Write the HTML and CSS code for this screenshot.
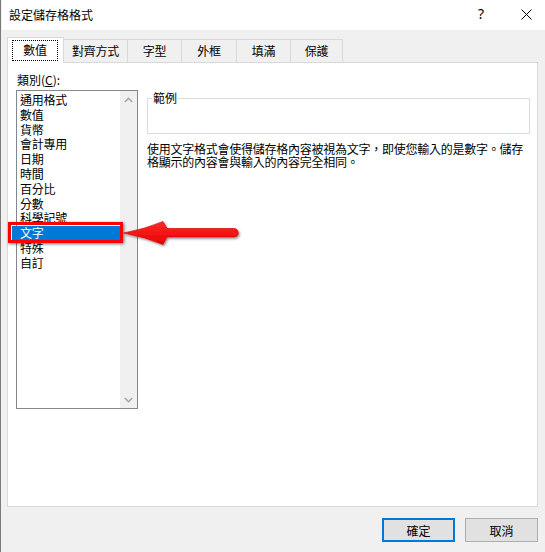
FILE: index.html
```html
<!DOCTYPE html>
<html lang="zh-Hant">
<head>
    <meta charset="UTF-8">
    <title>設定儲存格格式</title>
    <link rel="stylesheet" href="styles.css">
</head>
<body>
    <div class="window">
        <!-- Title bar -->
        <header class="titlebar">
            <span class="title">設定儲存格格式</span>
            <span class="help">?</span>
            <span class="close">
                <svg width="11" height="11" viewBox="0 0 11 11">
                    <path d="M0.5 0.5 L10.5 10.5 M10.5 0.5 L0.5 10.5" stroke="#000" stroke-width="1" fill="none"/>
                </svg>
            </span>
        </header>

        <!-- Tabs -->
        <nav class="tabs">
            <div class="tab active"><span class="focus">數值</span></div>
            <div class="tab">對齊方式</div>
            <div class="tab">字型</div>
            <div class="tab">外框</div>
            <div class="tab">填滿</div>
            <div class="tab">保護</div>
        </nav>

        <!-- Tab page -->
        <section class="panel">
            <div class="category">
                <div class="category-label">類別(<u>C</u>):</div>
                <div class="listbox">
                    <ul class="items">
                        <li class="item">通用格式</li>
                        <li class="item">數值</li>
                        <li class="item">貨幣</li>
                        <li class="item">會計專用</li>
                        <li class="item">日期</li>
                        <li class="item">時間</li>
                        <li class="item">百分比</li>
                        <li class="item">分數</li>
                        <li class="item">科學記號</li>
                        <li class="item selected">文字</li>
                        <li class="item">特殊</li>
                        <li class="item">自訂</li>
                    </ul>
                    <div class="scrollbar">
                        <div class="scroll-btn">
                            <svg width="9" height="6" viewBox="0 0 9 6"><path d="M0.8 5 L4.5 1.3 L8.2 5" stroke="#a6a6a6" stroke-width="1.6" fill="none"/></svg>
                        </div>
                        <div class="scroll-btn">
                            <svg width="9" height="6" viewBox="0 0 9 6"><path d="M0.8 1 L4.5 4.7 L8.2 1" stroke="#a6a6a6" stroke-width="1.6" fill="none"/></svg>
                        </div>
                    </div>
                </div>
            </div>

            <div class="details">
                <fieldset class="sample">
                    <legend>範例</legend>
                    <div class="sample-body"></div>
                </fieldset>
                <p class="description">使用文字格式會使得儲存格內容被視為文字，即使您輸入的是數字。儲存格顯示的內容會與輸入的內容完全相同。</p>
            </div>
        </section>

        <!-- Dialog buttons -->
        <footer class="buttons">
            <button class="btn primary">確定</button>
            <button class="btn">取消</button>
        </footer>
    </div>

    <!-- Annotation: red frame + arrow -->
    <div class="mark-frame"></div>
    <svg class="mark-arrow" width="128" height="34" viewBox="118 215 128 34">
        <defs>
            <linearGradient id="arrowFill" x1="0" y1="0" x2="0" y2="1">
                <stop offset="0" stop-color="#ff2a2a"/>
                <stop offset="1" stop-color="#e80000"/>
            </linearGradient>
            <filter id="arrowShadow" x="-10%" y="-30%" width="120%" height="170%">
                <feDropShadow dx="1.2" dy="1.5" stdDeviation="1" flood-color="#000" flood-opacity="0.45"/>
            </filter>
        </defs>
        <path d="M123.5 233 Q145 229 163 221.5 L167 228.5 L234 228.5 A4.25 4.25 0 0 1 234 237 L167 237 L163 244.5 Q145 237 123.5 233 Z"
              fill="url(#arrowFill)" stroke="#c80000" stroke-width="0.6" filter="url(#arrowShadow)"/>
    </svg>
</body>
</html>
```

FILE: styles.css
```css
* {
    margin: 0;
    padding: 0;
    box-sizing: border-box;
}

body {
    position: relative;
    width: 545px;
    height: 552px;
    overflow: hidden;
    background: #f0f0f0;
    font-family: "Noto Sans CJK TC", sans-serif;
    font-size: 12px;
    color: #000;
}

.window {
    height: 552px;
    border-left: 1px solid #7a7a7a;
    padding-left: 1px;
    background: #f0f0f0;
}

/* Title bar */
.titlebar {
    display: flex;
    align-items: center;
    height: 30px;
    padding: 0 0 2px 7px;
    background: #fff;
}

.title {
    font-size: 12px;
}

.help {
    margin-left: auto;
    width: 20px;
    text-align: center;
    font-family: "Noto Sans", sans-serif;
    font-size: 14px;
    line-height: 16px;
}

.close {
    display: flex;
    justify-content: center;
    width: 20px;
    margin: 0 9px 0 25px;
}

/* Tabs */
.tabs {
    display: flex;
    align-items: flex-end;
    height: 32px;
    padding-left: 5px;
}

.tab {
    height: 23px;
    padding-top: 4px;
    margin-left: -1px;
    border: 1px solid #d9d9d9;
    border-bottom: none;
    background: #f0f0f0;
    text-align: center;
    line-height: 14px;
    letter-spacing: -0.2px;
    white-space: nowrap;
}

.tab:nth-child(1) { width: 57px; margin-left: 0; }
.tab:nth-child(2) { width: 65px; }
.tab:nth-child(3) { width: 55px; }
.tab:nth-child(4) { width: 56px; }
.tab:nth-child(5) { width: 55px; }
.tab:nth-child(6) { width: 53px; }

.tab.active {
    position: relative;
    z-index: 1;
    height: 26px;
    margin-bottom: -1px;
    padding-top: 2px;
    background: #fff;
}

.focus {
    display: block;
    height: 21px;
    margin: 0 5px 0 4px;
    border: 1px dotted #000;
    line-height: 18px;
}

/* Tab page */
.panel {
    display: flex;
    width: 531px;
    height: 445px;
    margin-left: 5px;
    border: 1px solid #d9d9d9;
    background: #fff;
}

.category {
    padding-left: 8px;
}

.category-label {
    margin-top: 10px;
    padding-left: 1px;
    line-height: 14px;
}

.category-label u {
    text-underline-offset: 1px;
}

.listbox {
    display: flex;
    width: 122px;
    height: 319px;
    margin-top: 3px;
    border: 1px solid #828790;
}

.items {
    flex: 1;
    list-style: none;
    padding-top: 2px;
}

.item {
    padding-left: 3px;
    line-height: 14.8px;
    letter-spacing: -0.25px;
    white-space: nowrap;
}

.item.selected {
    position: relative;
    margin-left: -5px;
    padding-left: 8px;
    background: #0078d7;
    color: #fff;
}

.scrollbar {
    display: flex;
    flex-direction: column;
    justify-content: space-between;
    width: 17px;
    background: #f0f0f0;
}

.scroll-btn {
    display: flex;
    align-items: center;
    justify-content: center;
    height: 17px;
}

.details {
    width: 383px;
    margin-left: 9px;
}

.sample {
    margin-top: 28px;
    padding: 0 4px;
    border: 1px solid #dcdcdc;
}

.sample legend {
    padding: 0 1px;
    line-height: 14px;
}

.sample-body {
    height: 28px;
}

.description {
    margin-top: 8px;
    line-height: 13px;
    letter-spacing: -0.25px;
}

/* Dialog buttons */
.buttons {
    display: flex;
    justify-content: flex-end;
    gap: 10px;
    padding: 11px 7px 0 0;
}

.btn {
    width: 73px;
    height: 24px;
    border: 1px solid #adadad;
    background: #e1e1e1;
    font-family: inherit;
    font-size: 12px;
    color: #000;
}

.btn.primary {
    border: 2px solid #0078d7;
}

/* Annotation overlay */
.mark-frame {
    position: absolute;
    left: 8px;
    top: 222px;
    width: 115px;
    height: 21px;
    border: 3px solid #ff0000;
    box-shadow: 1px 1px 3px rgba(0, 0, 0, 0.55);
    pointer-events: none;
}

.mark-arrow {
    position: absolute;
    left: 118px;
    top: 215px;
    pointer-events: none;
}
```
